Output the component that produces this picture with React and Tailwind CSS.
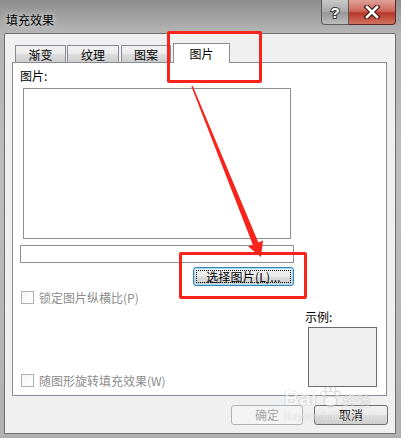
import React from "react";

const F = "font-['Noto_Sans_CJK_SC','Liberation_Sans',sans-serif]";

function Tab({ label, w, selected, ml }) {
  if (selected) {
    return (
      <div
        className={`relative z-10 -mb-px h-[20px] border border-b-0 border-[#898c95] bg-white flex justify-center pt-[3px] text-[12px] leading-[14px] text-black ${w} ${ml}`}
      >
        {label}
      </div>
    );
  }
  return (
    <div
      className={`h-[17px] border border-b-0 border-[#898c95] bg-[linear-gradient(180deg,#f2f2f2_0%,#ebebeb_50%,#dddddd_51%,#cfcfcf_100%)] flex justify-center pt-[2px] text-[12px] leading-[14px] text-black ${w} ${ml}`}
    >
      {label}
    </div>
  );
}

function Check({ label }) {
  return (
    <div className="flex items-center gap-[5px]">
      <div className="w-[13px] h-[13px] border border-[#b1b1b1] bg-[linear-gradient(135deg,#f4f4f4,#ffffff)]" />
      <span className="text-[12px] leading-[13px] text-[#8d8d8d]">{label}</span>
    </div>
  );
}

export default function App() {
  return (
    <div
      className={`relative w-[401px] h-[438px] overflow-hidden flex flex-col bg-[linear-gradient(180deg,#8d8d8d_0%,#b3b3b3_7%,#bdbdbd_40%,#b0b0b0_100%)] ${F}`}
    >
      {/* title bar */}
      <div className="h-[33px] flex items-start shrink-0">
        <div className="pl-[6px] pt-[13px] text-[12px] leading-[14px] text-black [text-shadow:0_0_6px_rgba(255,255,255,0.9)]">
          填充效果
        </div>
        <div className="ml-auto mr-[5px] flex">
          <div className="w-[28px] h-[25px] rounded-bl-[4px] border border-t-0 border-[#5a5a5a] bg-[linear-gradient(180deg,#c8c8c8_0%,#a9a9a9_50%,#959595_51%,#bcbcbc_100%)] flex items-center justify-center">
            <svg width="14" height="17" viewBox="0 0 14 17">
              <text
                x="7"
                y="14"
                textAnchor="middle"
                fontFamily="Liberation Sans, sans-serif"
                fontWeight="bold"
                fontSize="15"
                fill="#ffffff"
                stroke="#3a3a3a"
                strokeWidth="2"
                paintOrder="stroke"
              >
                ?
              </text>
            </svg>
          </div>
          <div className="w-[47px] h-[25px] rounded-br-[4px] border border-l-0 border-t-0 border-[#5a2a2a] bg-[linear-gradient(180deg,#e0a197_0%,#cf6a5c_45%,#b7382a_55%,#d0735f_100%)] flex items-center justify-center">
            <svg width="18" height="14" viewBox="0 0 18 14">
              <path d="M4 2 L14 12 M14 2 L4 12" stroke="#4a1c16" strokeWidth="5" strokeLinecap="square" />
              <path d="M4 2 L14 12 M14 2 L4 12" stroke="#ffffff" strokeWidth="2.6" strokeLinecap="square" />
            </svg>
          </div>
        </div>
      </div>

      {/* client area */}
      <div className="ml-[4px] w-[392px] h-[401px] shrink-0 border border-[#6f6f6f] rounded-t-[2px] bg-[#f0f0f0] pl-[7px] pt-[9px] flex flex-col">
        {/* tabs */}
        <div className="flex items-end h-[19px] pl-[3px]">
          <Tab label="渐变" w="w-[51px]" ml="" />
          <Tab label="纹理" w="w-[52px]" ml="ml-[1px]" />
          <Tab label="图案" w="w-[50px]" ml="ml-[2px]" />
          <Tab label="图片" w="w-[57px]" ml="ml-[2px]" selected />
        </div>

        {/* panel */}
        <div className="w-[375px] h-[334px] border border-[#898c95] bg-white flex flex-col">
          <div className="ml-[7px] mt-[6px] text-[12px] leading-[14px] text-black">图片:</div>
          <div className="ml-[10px] mt-[5px] w-[268px] h-[151px] border border-[#8e8f91] bg-white" />
          <div className="ml-[7px] mt-[6px] w-[274px] h-[18px] border border-[#8e8f91] bg-white" />
          <div className="ml-[180px] mt-[4px] w-[101px] h-[19px] rounded-[3px] border border-[#3c7fb1] bg-[linear-gradient(180deg,#f2f2f2_0%,#ebebeb_50%,#dddddd_51%,#cfcfcf_100%)] shadow-[inset_0_0_0_1px_#9be0fb] p-[2px]">
            <div className="w-full h-full border border-dotted border-black flex items-center justify-center text-[12px] leading-[13px] text-black tracking-[0.2px]">
              选择图片(L)...
            </div>
          </div>

          <div className="flex">
            <div className="w-[292px] pl-[8px] pt-[5px] flex flex-col gap-[70px]">
              <Check label="锁定图片纵横比(P)" />
              <Check label="随图形旋转填充效果(W)" />
            </div>
            <div className="flex flex-col">
              <div className="mt-[24px] text-[12px] leading-[14px] text-black">示例:</div>
              <div className="ml-[3px] mt-[3px] w-[69px] h-[60px] border border-[#6d6d6d] bg-[#efefef]" />
            </div>
          </div>
        </div>

        {/* buttons */}
        <div className="mt-[9px] flex justify-end pr-[7px] gap-[11px]">
          <div className="w-[72px] h-[20px] rounded-[3px] border border-[#adb2b5] bg-[#f4f4f4] flex items-center justify-center text-[12px] leading-[14px] text-[#a3a3a3]">
            确定
          </div>
          <div className="w-[74px] h-[20px] rounded-[3px] border border-[#707070] bg-[linear-gradient(180deg,#f2f2f2_0%,#ebebeb_50%,#dddddd_51%,#cfcfcf_100%)] flex items-center justify-center text-[12px] leading-[14px] text-black">
            取消
          </div>
        </div>
      </div>

      {/* watermark */}
      <div className="absolute left-[284px] top-[385px] pointer-events-none opacity-50 flex flex-col items-start">
        <div className="flex items-end text-white font-bold text-[21px] leading-[22px] [text-shadow:0_0_1px_#8a8a8a,0_0_1px_#8a8a8a] font-['Liberation_Sans',sans-serif]">
          <span>Bai</span>
          <svg width="24" height="24" viewBox="0 0 22 22" className="mx-[1px]">
            <g fill="#fff" stroke="#9a9a9a" strokeWidth="0.8">
              <circle cx="5" cy="8" r="2.5" />
              <circle cx="9" cy="4" r="2.5" />
              <circle cx="14" cy="4" r="2.5" />
              <circle cx="18" cy="8" r="2.5" />
              <ellipse cx="11.5" cy="15" rx="6" ry="5" />
            </g>
          </svg>
          <span className={`${F} text-[14px] leading-[18px] font-normal`}>经验</span>
        </div>
        <div className="mt-[1px] text-[11px] leading-[12px] text-white [text-shadow:0_0_1px_#8a8a8a] font-['Liberation_Sans',sans-serif]">
          jingyan.baidu.com
        </div>
      </div>

      {/* annotations */}
      <div className="absolute left-[167px] top-[31px] w-[95px] h-[52px] border-[3px] border-[#f8241b] rounded-[2px] pointer-events-none" />
      <div className="absolute left-[179px] top-[252px] w-[128px] h-[47px] border-[3px] border-[#f8241b] rounded-[2px] pointer-events-none" />
      <svg className="absolute left-0 top-0 pointer-events-none" width="401" height="438" viewBox="0 0 401 438">
        <polygon
          points="192.7,85.7 258.4,242.5 263,240.6 261,257 248.2,246.6 252.8,244.7 191.3,86.3"
          fill="#f8241b"
        />
      </svg>
    </div>
  );
}
